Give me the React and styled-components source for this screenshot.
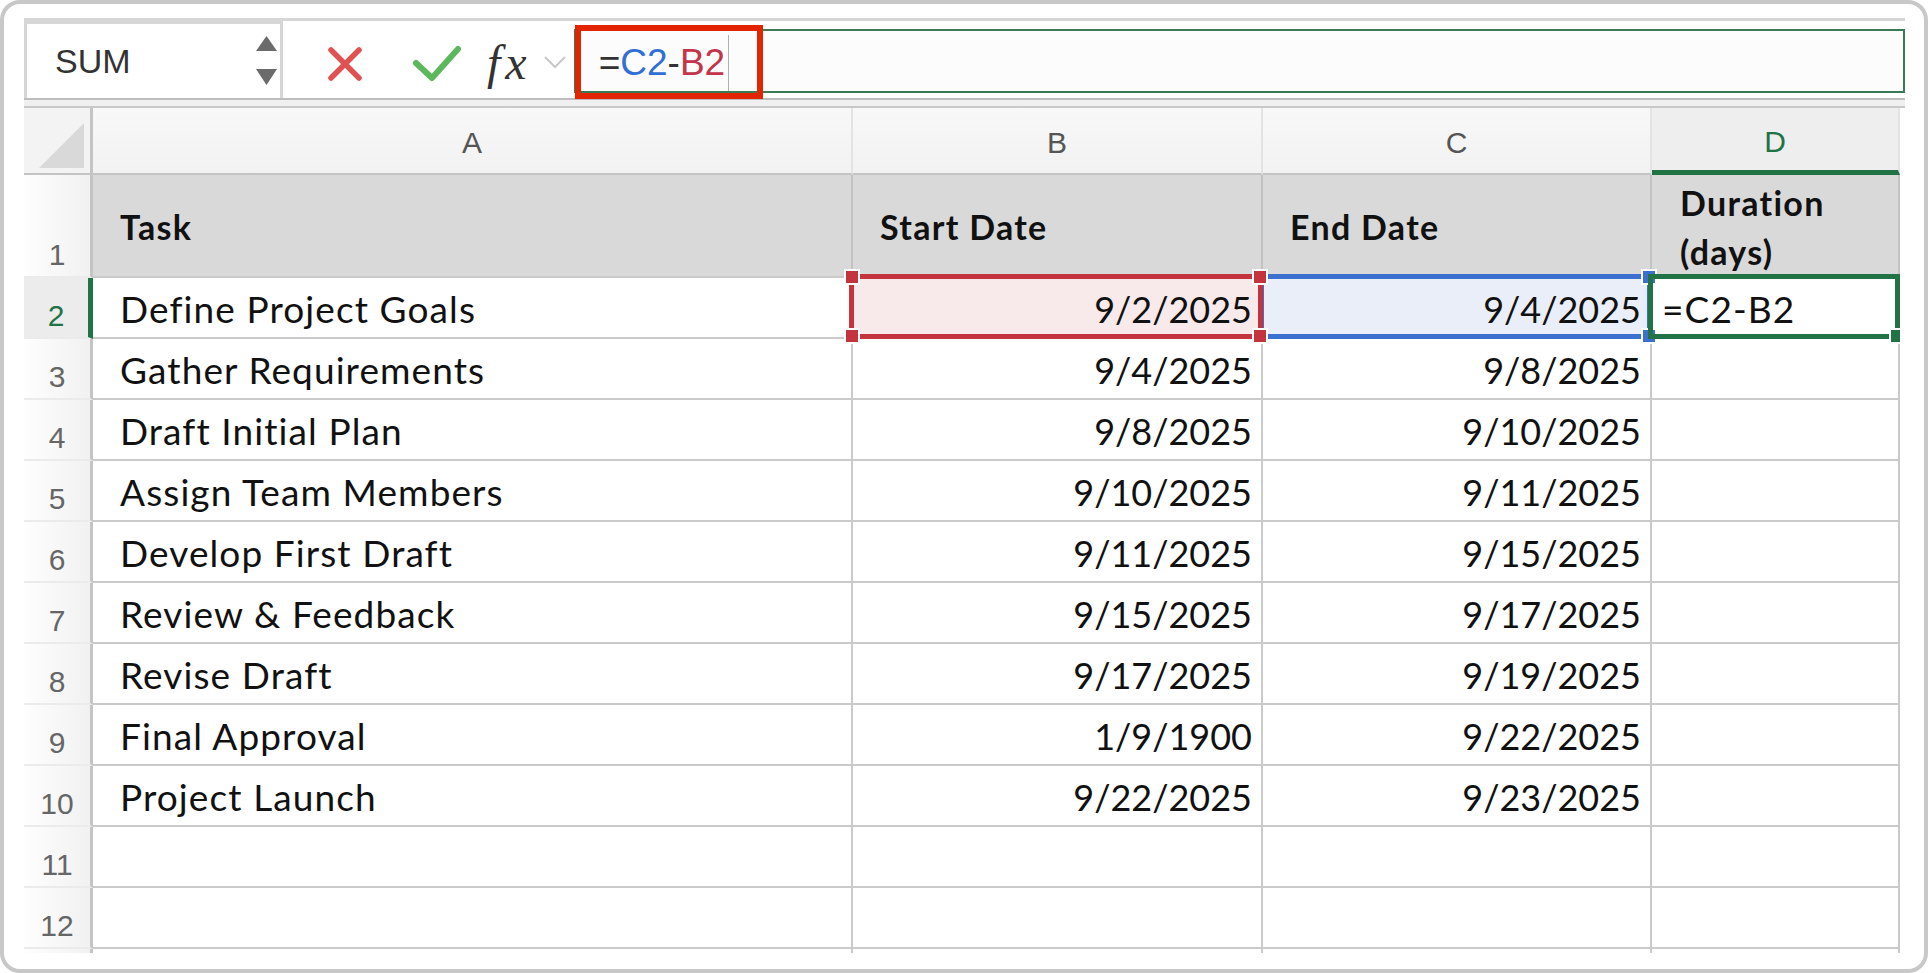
import React from 'react';
import styled, { createGlobalStyle } from 'styled-components';

const GlobalStyle = createGlobalStyle`
  html, body {
    margin: 0;
    padding: 0;
    background: #ffffff;
  }
`;

const GREEN = '#217346';
const RED = '#c4343f';
const BLUE = '#3b70d0';

// Outer window
const Frame = styled.div`
  width: 1928px;
  height: 973px;
  box-sizing: border-box;
  border: 4px solid #c8c8c8;
  border-radius: 20px;
  padding: 14px 19px 0 20px;
  background: #fff;
  overflow: hidden;
`;

// Formula bar
const Toolbar = styled.div`
  display: flex;
  align-items: stretch;
  height: 82px;
  box-sizing: border-box;
  border-top: 3px solid #d6d6d6;
  border-bottom: 2px solid #bdbdbd;
`;

const NameBox = styled.div`
  width: 259px;
  box-sizing: border-box;
  border: 3px solid #d6d6d6;
  border-bottom: none;
  display: flex;
  align-items: center;
  justify-content: space-between;
  padding: 0 2px 0 28px;
  font-family: "Liberation Sans", Arial, sans-serif;
  font-size: 34px;
  color: #333;
  background: #fff;
`;

const IconSlot = styled.div`
  display: flex;
  align-items: center;
  margin-left: ${p => p.$gap}px;
  margin-top: ${p => p.$top || 0}px;
`;

const Fx = styled.span`
  font-family: "Liberation Serif", "Times New Roman", serif;
  font-style: italic;
  font-size: 48px;
  letter-spacing: 5px;
  color: #333;
  line-height: 1;
`;

const FormulaField = styled.div`
  position: relative;
  flex: 1;
  margin: 8px 0 5px 8px;
  border: 2px solid #3b7a57;
  background: #fcfcfc;
  display: flex;
  align-items: center;
  padding-left: 23px;
  padding-top: 4px;
  font-family: "Liberation Sans", Arial, sans-serif;
  font-size: 37px;
  color: #333;
`;

const Ref = styled.span`
  color: ${p => p.$color};
`;

const Caret = styled.span`
  display: inline-block;
  width: 1px;
  height: 56px;
  margin-left: 3px;
  background: #b0b0b0;
`;

const Callout = styled.div`
  position: absolute;
  left: -1px;
  top: -6px;
  width: 188px;
  height: 74px;
  box-sizing: border-box;
  border: 6px solid #e32400;
`;

const Rule = styled.div`
  height: 6px;
  background: #f0f0f0;
  border-bottom: 2px solid #c8c8c8;
`;

// Sheet
const Sheet = styled.div`
  display: grid;
  width: 1876px;
  grid-template-columns: 69px 760px 410px 389px 248px;
  grid-template-rows: 67px 103px repeat(12, 61px);
  height: 845px;
  overflow: hidden;
`;

const Corner = styled.div`
  display: flex;
  justify-content: flex-end;
  align-items: flex-end;
  padding: 0 6px 5px 0;
  background: #f3f3f3;
  border-right: 3px solid #c4c4c4;
  border-bottom: 2px solid #c4c4c4;
`;

const ColHeader = styled.div`
  display: flex;
  align-items: center;
  justify-content: center;
  box-sizing: border-box;
  background: ${p => (p.$active ? '#eeeeee' : 'linear-gradient(#f8f8f8, #f2f2f2)')};
  border-right: 2px solid #e3e3e3;
  border-bottom: ${p => (p.$active ? `5px solid ${GREEN}` : '2px solid #c4c4c4')};
  font-family: "Liberation Sans", Arial, sans-serif;
  font-size: 30px;
  color: ${p => (p.$active ? GREEN : '#555')};
  padding-top: ${p => (p.$active ? 6 : 4)}px;
`;

const RowHeader = styled.div`
  display: flex;
  align-items: flex-end;
  justify-content: center;
  box-sizing: border-box;
  padding-bottom: 6px;
  background: ${p => (p.$active ? '#ececec' : 'linear-gradient(90deg, #fefefe, #f1f1f1)')};
  border-right: ${p => (p.$active ? `5px solid ${GREEN}` : '3px solid #c4c4c4')};
  border-bottom: 2px solid #ebebeb;
  font-family: "Liberation Sans", Arial, sans-serif;
  font-size: 30px;
  line-height: 1;
  color: ${p => (p.$active ? GREEN : '#666')};
`;

const Cell = styled.div`
  position: ${p => (p.$sel ? 'relative' : 'static')};
  display: flex;
  align-items: center;
  justify-content: ${p => (p.$right ? 'flex-end' : 'flex-start')};
  box-sizing: border-box;
  min-width: 0;
  padding: 4px 9px 0 ${p => p.$pad ?? 27}px;
  background: ${p => p.$bg || (p.$head ? '#d9d9d9' : '#fff')};
  border-right: 2px solid ${p => (p.$head ? '#c2c2c2' : '#cacaca')};
  border-bottom: 2px solid #cacaca;
  font-family: Lato, "Open Sans", sans-serif;
  font-size: ${p => (p.$head ? 34 : p.$right ? 36 : 37)}px;
  letter-spacing: ${p => (p.$head ? 1.3 : p.$right ? 0 : 1.1)}px;
  font-weight: ${p => (p.$head ? 700 : 400)};
  line-height: ${p => (p.$head ? 1.42 : 1.2)};
  color: #111;
  white-space: nowrap;
`;

const Selection = styled.div`
  position: absolute;
  top: -4px;
  left: -4px;
  right: -2px;
  bottom: -2px;
  border: 5px solid ${p => p.$color};
  z-index: ${p => p.$z};
  pointer-events: none;
`;

const Handle = styled.div`
  position: absolute;
  width: 16px;
  height: 16px;
  box-sizing: border-box;
  background: ${p => p.$color};
  border: 2px solid #fff;
  ${p => (p.$pos.includes('t') ? 'top: -10px;' : 'bottom: -10px;')}
  ${p => (p.$pos.includes('l') ? 'left: -10px;' : 'right: -10px;')}
`;

const XIcon = () => (
  <svg width="36" height="34" viewBox="0 0 36 34">
    <path d="M4 3 L32 31 M32 3 L4 31" stroke="#e05252" strokeWidth="5.5" strokeLinecap="round" fill="none" />
  </svg>
);

const CheckIcon = () => (
  <svg width="48" height="38" viewBox="0 0 48 38">
    <polyline points="3,18 19,33 45,4" stroke="#5bb85d" strokeWidth="6" strokeLinecap="round" strokeLinejoin="round" fill="none" />
  </svg>
);

const Chevron = () => (
  <svg width="22" height="14" viewBox="0 0 22 14">
    <polyline points="1,2 11,12 21,2" stroke="#c8c8c8" strokeWidth="2" fill="none" />
  </svg>
);

const Spinner = () => (
  <svg width="22" height="50" viewBox="0 0 22 50">
    <polygon points="0,15 10.5,0 21,15" fill="#6b6b6b" />
    <polygon points="0,33 21,33 10.5,49" fill="#6b6b6b" />
  </svg>
);

const CornerTriangle = () => (
  <svg width="45" height="45" viewBox="0 0 45 45">
    <polygon points="45,0 45,45 0,45" fill="#d9d9d9" />
  </svg>
);

const rows = [
  ['Define Project Goals', '9/2/2025', '9/4/2025'],
  ['Gather Requirements', '9/4/2025', '9/8/2025'],
  ['Draft Initial Plan', '9/8/2025', '9/10/2025'],
  ['Assign Team Members', '9/10/2025', '9/11/2025'],
  ['Develop First Draft', '9/11/2025', '9/15/2025'],
  ['Review & Feedback', '9/15/2025', '9/17/2025'],
  ['Revise Draft', '9/17/2025', '9/19/2025'],
  ['Final Approval', '1/9/1900', '9/22/2025'],
  ['Project Launch', '9/22/2025', '9/23/2025'],
  ['', '', ''],
  ['', '', ''],
  ['', '', ''],
];

const App = () => {
  return (
    <>
      <GlobalStyle />
      <Frame>
        <Toolbar>
          <NameBox>
            SUM
            <Spinner />
          </NameBox>
          <IconSlot $gap={44} $top={8}><XIcon /></IconSlot>
          <IconSlot $gap={50} $top={8}><CheckIcon /></IconSlot>
          <IconSlot $gap={26} $top={6}><Fx>fx</Fx></IconSlot>
          <IconSlot $gap={12} $top={4}><Chevron /></IconSlot>
          <FormulaField>
            =<Ref $color="#2f6fd6">C2</Ref>-<Ref $color="#c4344a">B2</Ref>
            <Caret />
            <Callout />
          </FormulaField>
        </Toolbar>
        <Rule />
        <Sheet>
          <Corner><CornerTriangle /></Corner>
          <ColHeader>A</ColHeader>
          <ColHeader>B</ColHeader>
          <ColHeader>C</ColHeader>
          <ColHeader $active>D</ColHeader>

          <RowHeader>1</RowHeader>
          <Cell $head>Task</Cell>
          <Cell $head>Start Date</Cell>
          <Cell $head>End Date</Cell>
          <Cell $head $pad={28}>Duration<br />(days)</Cell>

          {rows.map((r, i) => {
            const n = i + 2;
            const active = n === 2;
            return (
              <React.Fragment key={n}>
                <RowHeader $active={active}>{n <= 12 ? n : ''}</RowHeader>
                <Cell>{r[0]}</Cell>
                <Cell $right $sel={active} $bg={active ? '#f8e9ea' : undefined}>
                  {r[1]}
                  {active && (
                    <Selection $color={RED} $z={3}>
                      <Handle $color={RED} $pos="tl" />
                      <Handle $color={RED} $pos="tr" />
                      <Handle $color={RED} $pos="bl" />
                      <Handle $color={RED} $pos="br" />
                    </Selection>
                  )}
                </Cell>
                <Cell $right $sel={active} $bg={active ? '#e9eef9' : undefined}>
                  {r[2]}
                  {active && (
                    <Selection $color={BLUE} $z={2}>
                      <Handle $color={BLUE} $pos="tr" />
                      <Handle $color={BLUE} $pos="br" />
                    </Selection>
                  )}
                </Cell>
                <Cell $sel={active} $pad={10}>
                  {active && '=C2-B2'}
                  {active && (
                    <Selection $color={GREEN} $z={4}>
                      <Handle $color={GREEN} $pos="br" />
                    </Selection>
                  )}
                </Cell>
              </React.Fragment>
            );
          })}
        </Sheet>
      </Frame>
    </>
  );
};

export default App;
